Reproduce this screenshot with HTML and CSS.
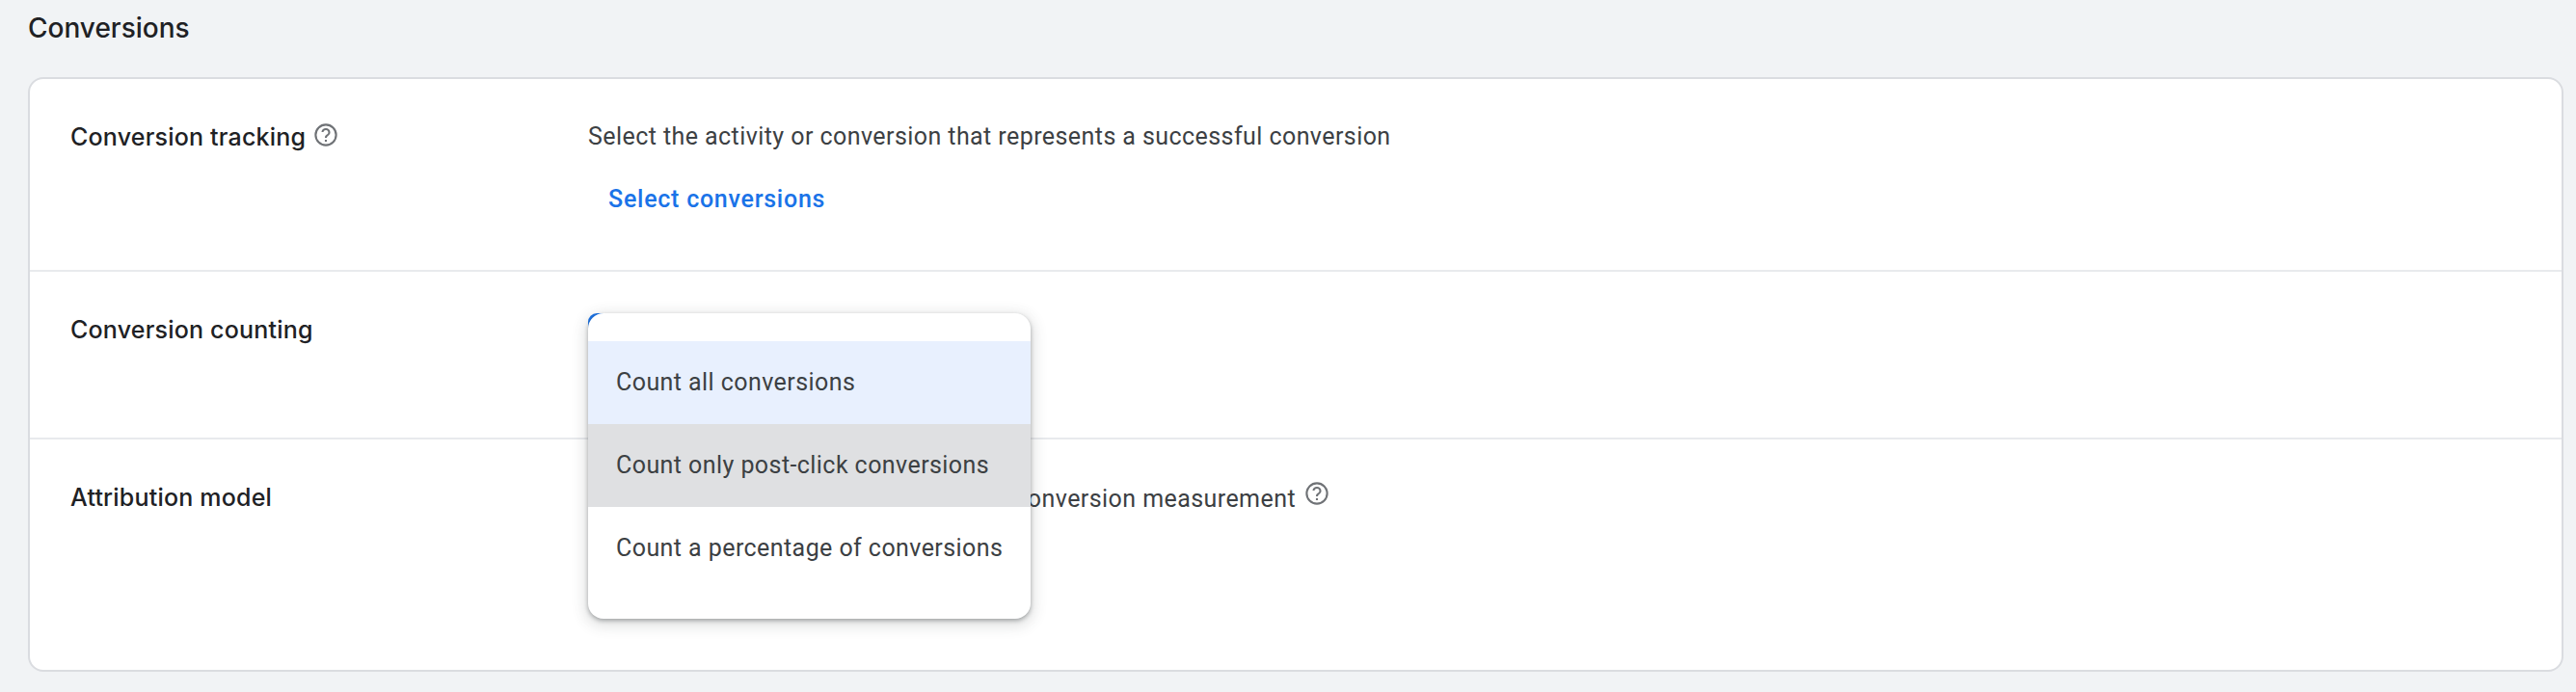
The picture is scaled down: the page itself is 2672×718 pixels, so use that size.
FILE: index.html
```html
<!DOCTYPE html>
<html lang="en">
<head>
<meta charset="utf-8">
<title>Conversions</title>
<link rel="stylesheet" href="styles.css">
</head>
<body>
<main class="page">
  <h1 class="title">Conversions</h1>
  <section class="card">
    <div class="row row-tracking">
      <div class="label">Conversion tracking
        <svg class="help help-label" viewBox="0 0 24 24"><path d="M12 2a10 10 0 1 0 0 20 10 10 0 0 0 0-20zm0 18.2a8.2 8.2 0 1 1 0-16.4 8.2 8.2 0 0 1 0 16.4z"/><path d="M11.1 16.2h1.8V18h-1.8zM12.2 6.1c-2.1-.1-3.9 1.3-4.1 3.3h1.8c.2-1 1.2-1.7 2.2-1.6 1.2 0 2.1.9 2 2 0 .8-.6 1.3-1.3 1.8-.9.7-1.7 1.4-1.7 3h1.8c0-1 .6-1.5 1.3-2 .9-.7 1.7-1.4 1.7-2.9 0-2-1.7-3.6-3.9-3.6z"/></svg>
      </div>
      <div class="value">
        <p class="text">Select the activity or conversion that represents a successful conversion</p>
        <a class="link" href="#">Select conversions</a>
      </div>
    </div>
    <div class="row row-counting">
      <div class="label">Conversion counting</div>
      <div class="value value-menu">
        <span class="radio"></span>
        <ul class="menu">
          <li class="item item-selected">Count all conversions</li>
          <li class="item item-hover">Count only post-click conversions</li>
          <li class="item">Count a percentage of conversions</li>
        </ul>
      </div>
    </div>
    <div class="row row-attribution">
      <div class="label">Attribution model</div>
      <div class="value">
        <p class="text text-help">Select the attribution model to use for conversion measurement
          <svg class="help help-text" viewBox="0 0 24 24"><path d="M12 2a10 10 0 1 0 0 20 10 10 0 0 0 0-20zm0 18.2a8.2 8.2 0 1 1 0-16.4 8.2 8.2 0 0 1 0 16.4z"/><path d="M11.1 16.2h1.8V18h-1.8zM12.2 6.1c-2.1-.1-3.9 1.3-4.1 3.3h1.8c.2-1 1.2-1.7 2.2-1.6 1.2 0 2.1.9 2 2 0 .8-.6 1.3-1.3 1.8-.9.7-1.7 1.4-1.7 3h1.8c0-1 .6-1.5 1.3-2 .9-.7 1.7-1.4 1.7-2.9 0-2-1.7-3.6-3.9-3.6z"/></svg>
        </p>
      </div>
    </div>
  </section>
</main>
</body>
</html>
```

FILE: styles.css
```css
html, body {
  margin: 0;
  padding: 0;
  background: #f1f3f5;
  height: 100%;
}
body {
  overflow: hidden;
  font-family: Roboto, "Liberation Sans", sans-serif;
  color: #3c4043;
}
.page {
  padding: 12px 13px 0 29px;
}
.title {
  margin: 0;
  font-family: Inter, Roboto, sans-serif;
  font-size: 28px;
  line-height: 34px;
  font-weight: 500;
  color: #202124;
}
.card {
  box-sizing: border-box;
  margin-top: 34px;
  height: 617px;
  background: #fff;
  border: 2px solid #dadce0;
  border-radius: 16px;
}
.row {
  box-sizing: border-box;
  display: grid;
  grid-template-columns: 537px 1fr;
  padding: 43px 42px 0;
  border-bottom: 2px solid #e8eaed;
}
.row-tracking { height: 200px; }
.row-counting { height: 174px; }
.row-attribution { height: 239px; border-bottom: 0; }
.label {
  margin-top: 1px;
  font-family: Inter, Roboto, sans-serif;
  font-size: 25px;
  line-height: 32px;
  font-weight: 500;
  letter-spacing: .2px;
  color: #202124;
  display: flex;
  align-items: flex-start;
  gap: 7px;
}
.value-menu { position: relative; }
.text {
  margin: 1px 0 0;
  font-size: 25px;
  line-height: 32px;
  letter-spacing: .43px;
  color: #3c4043;
}
.text-help {
  display: flex;
  align-items: flex-start;
  gap: 8px;
  margin-top: 3px;
}
.link {
  display: block;
  margin: 33px 0 0 21px;
  font-size: 25px;
  line-height: 32px;
  font-weight: 500;
  letter-spacing: .75px;
  color: #1a73e8;
  text-decoration: none;
}
.help { fill: #6f7276; width: 28px; height: 28px; flex: none; }
.help-text { margin-top: -4px; }
.radio {
  position: absolute;
  left: 0;
  top: 0;
  width: 24px;
  height: 24px;
  border-radius: 9px;
  background: #1a73e8;
}
.menu {
  position: absolute;
  left: 0;
  top: 0;
  z-index: 2;
  box-sizing: border-box;
  width: 459px;
  height: 317px;
  margin: 0;
  padding: 29px 0 30px;
  list-style: none;
  background: #fff;
  border-radius: 16px;
  box-shadow: 0 2px 4px rgba(60,64,67,.4), 0 4px 14px 4px rgba(60,64,67,.15);
}
.item {
  height: 86px;
  padding: 0 29px;
  font-size: 25px;
  line-height: 85px;
  letter-spacing: .43px;
  white-space: nowrap;
  color: #3c4043;
}
.item-selected { background: #e8f0fe; }
.item-hover { background: #dfe0e2; }
```
